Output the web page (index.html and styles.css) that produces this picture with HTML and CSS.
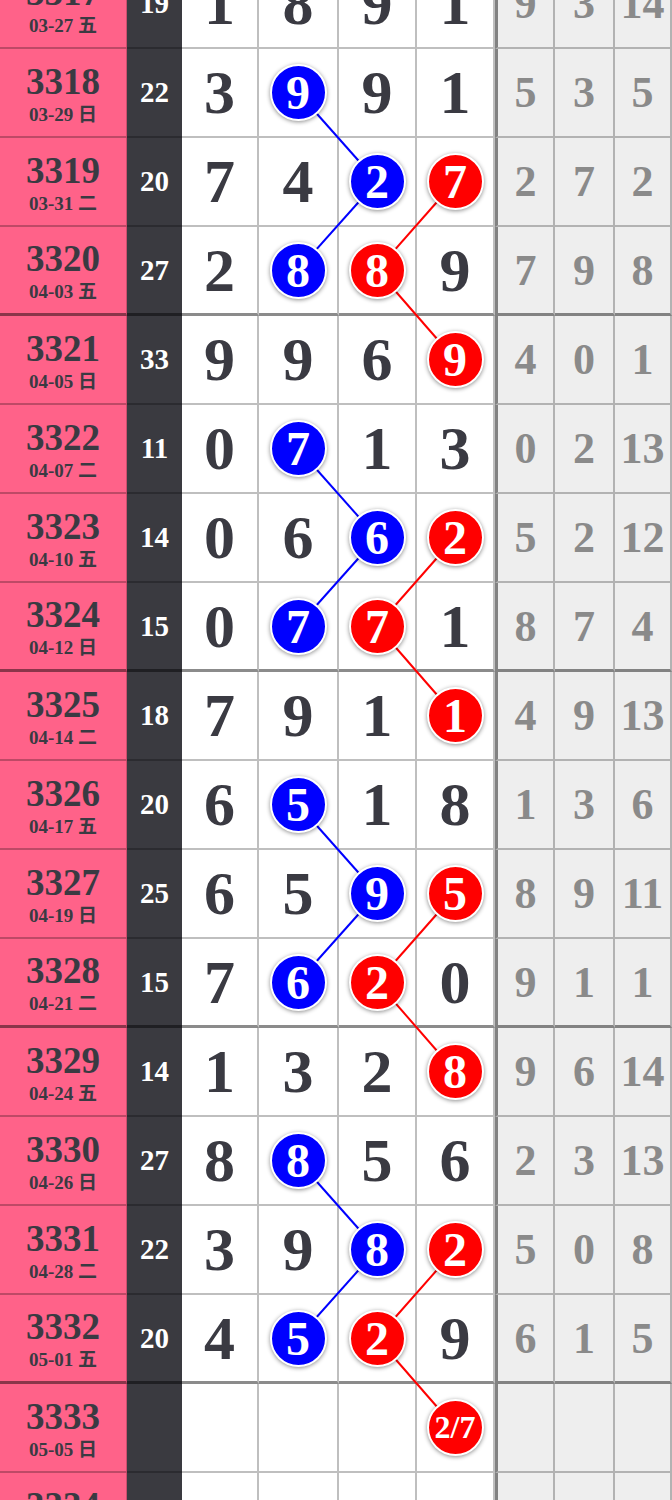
FILE: index.html
```html
<!DOCTYPE html>
<html lang="zh">
<head>
  <meta charset="UTF-8" />
  <meta name="viewport" content="width=device-width, initial-scale=1.0"/>
  <title>排列五走势</title>
  <link rel="stylesheet" href="styles.css">
</head>
<body>

  <!-- 走势表 -->
  <div class="board" id="board">
    <svg class="links" id="links"></svg>
  </div>

  <script>
    // issue, date, sum, digits, spans, marks (b = blue, r = red)
    const rows = [
      ["3317", "03-27 五", "19", [1, 8, 9, 1], [9, 3, 14], "----"],
      ["3318", "03-29 日", "22", [3, 9, 9, 1], [5, 3, 5], "-b--"],
      ["3319", "03-31 二", "20", [7, 4, 2, 7], [2, 7, 2], "--br"],
      ["3320", "04-03 五", "27", [2, 8, 8, 9], [7, 9, 8], "-br-"],
      ["3321", "04-05 日", "33", [9, 9, 6, 9], [4, 0, 1], "---r"],
      ["3322", "04-07 二", "11", [0, 7, 1, 3], [0, 2, 13], "-b--"],
      ["3323", "04-10 五", "14", [0, 6, 6, 2], [5, 2, 12], "--br"],
      ["3324", "04-12 日", "15", [0, 7, 7, 1], [8, 7, 4], "-br-"],
      ["3325", "04-14 二", "18", [7, 9, 1, 1], [4, 9, 13], "---r"],
      ["3326", "04-17 五", "20", [6, 5, 1, 8], [1, 3, 6], "-b--"],
      ["3327", "04-19 日", "25", [6, 5, 9, 5], [8, 9, 11], "--br"],
      ["3328", "04-21 二", "15", [7, 6, 2, 0], [9, 1, 1], "-br-"],
      ["3329", "04-24 五", "14", [1, 3, 2, 8], [9, 6, 14], "---r"],
      ["3330", "04-26 日", "27", [8, 8, 5, 6], [2, 3, 13], "-b--"],
      ["3331", "04-28 二", "22", [3, 9, 8, 2], [5, 0, 8], "--br"],
      ["3332", "05-01 五", "20", [4, 5, 2, 9], [6, 1, 5], "-br-"],
      ["3333", "05-05 日", "", ["", "", "", "2/7"], ["", "", ""], "---r"],
      ["3334", "05-08 五", "", ["", "", "", ""], ["", "", ""], "----"]
    ];

    const board = document.getElementById("board");

    rows.forEach((r, i) => {
      const row = document.createElement("div");
      row.className = "row" + ((i + 1) % 4 === 0 ? " group-end" : "");

      let html = `
        <div class="cell issue"><span class="no">${r[0]}</span><span class="date">${r[1]}</span></div>
        <div class="cell sum">${r[2]}</div>
      `;
      r[3].forEach((d, c) => {
        const m = r[5][c];
        if (m === "b" || m === "r") {
          const cls = (m === "b" ? "ball blue" : "ball red") + (String(d).length > 1 ? " small" : "");
          html += `<div class="cell num"><span class="${cls}" data-color="${m}" data-row="${i}">${d}</span></div>`;
        } else {
          html += `<div class="cell num">${d}</div>`;
        }
      });
      r[4].forEach((s, c) => {
        html += `<div class="cell span${c === 0 ? " first" : ""}">${s}</div>`;
      });

      row.innerHTML = html;
      board.appendChild(row);
    });

    // 连线
    const svg = document.getElementById("links");
    const box = board.getBoundingClientRect();
    svg.setAttribute("width", box.width);
    svg.setAttribute("height", box.height);

    ["b", "r"].forEach(color => {
      const balls = [...board.querySelectorAll(`.ball[data-color="${color}"]`)];
      for (let k = 1; k < balls.length; k++) {
        const a = balls[k - 1], b = balls[k];
        if (b.dataset.row - a.dataset.row !== 1) continue;
        const ra = a.getBoundingClientRect(), rb = b.getBoundingClientRect();
        const line = document.createElementNS("http://www.w3.org/2000/svg", "line");
        line.setAttribute("x1", ra.left + ra.width / 2 - box.left);
        line.setAttribute("y1", ra.top + ra.height / 2 - box.top);
        line.setAttribute("x2", rb.left + rb.width / 2 - box.left);
        line.setAttribute("y2", rb.top + rb.height / 2 - box.top);
        line.setAttribute("class", color === "b" ? "line-blue" : "line-red");
        svg.appendChild(line);
      }
    });
  </script>
</body>
</html>
```

FILE: styles.css
```css
body {
  margin: 0;
  padding: 0;
  background: #fff;
  color: #3a3a42;
  font-family: "Liberation Serif", "Noto Sans CJK SC", serif;
  font-weight: bold;
}

.board {
  position: relative;
  width: 672px;
  margin-top: -40px;
  overflow: hidden;
}

.links {
  position: absolute;
  left: 0;
  top: 0;
  z-index: 1;
  pointer-events: none;
}

.line-blue {
  stroke: #0000ff;
  stroke-width: 2;
}

.line-red {
  stroke: #ff0000;
  stroke-width: 2;
}

.row {
  display: grid;
  grid-template-columns: 127px 55px 77px 80px 78px 78px 60px 60px 57px;
  height: 89px;
}

.cell {
  display: flex;
  align-items: center;
  justify-content: center;
  box-sizing: border-box;
  border-bottom: 2px solid rgba(0, 0, 0, 0.25);
  border-right: 2px solid rgba(0, 0, 0, 0.25);
}

.row.group-end .cell {
  border-bottom: 3px solid rgba(0, 0, 0, 0.45);
}

.issue {
  flex-direction: column;
  background: #ff6289;
  border-right: 1px solid rgba(0, 0, 0, 0.2);
}

.issue .no {
  font-size: 37px;
  line-height: 34px;
  margin-top: 5px;
}

.issue .date {
  font-size: 19px;
  line-height: 22px;
  margin-top: 5px;
}

.sum {
  background: #3a3a40;
  color: #fff;
  font-size: 29px;
  border-right: none;
}

.num {
  font-size: 62px;
}

.span {
  background: #eeeeee;
  color: #8a8a8a;
  font-size: 44px;
}

.span.first {
  border-left: 3px solid rgba(0, 0, 0, 0.45);
}

.ball {
  position: relative;
  z-index: 2;
  display: flex;
  align-items: center;
  justify-content: center;
  width: 53px;
  height: 53px;
  border: 2px solid #fff;
  border-radius: 50%;
  box-shadow: 0 1px 4px rgba(0, 0, 0, 0.45);
  color: #fff;
  font-size: 48px;
}

.ball.blue {
  background: #0000ff;
}

.ball.red {
  background: #ff0000;
}

.ball.small {
  font-size: 32px;
}
```
